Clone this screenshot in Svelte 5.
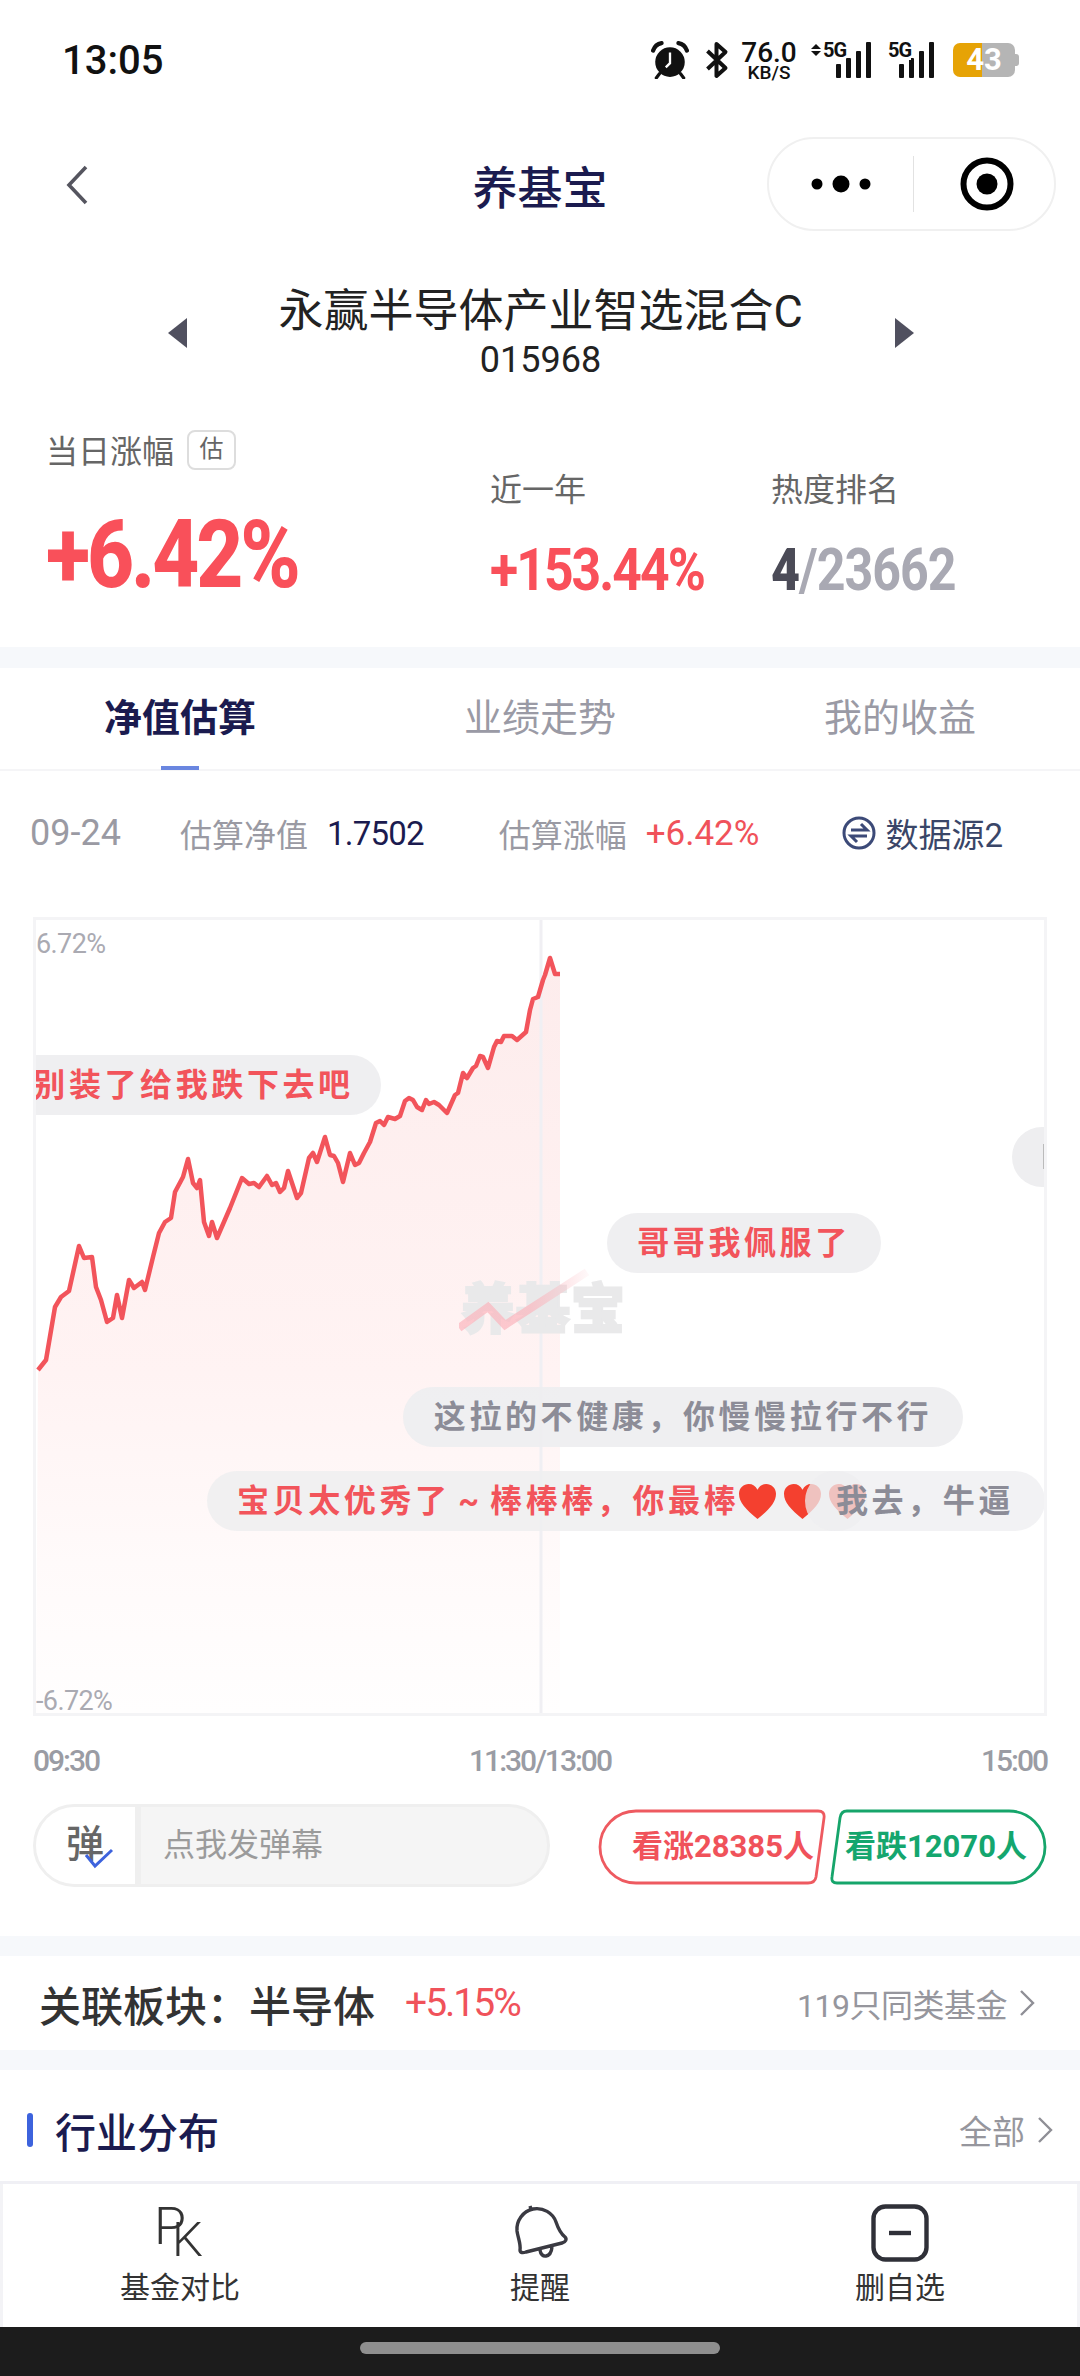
<script>
  // intraday estimate curve, sampled off the chart in page px
  const pts = [[38,1370],[46,1360],[55,1307],[61,1297],[69,1291],[79,1246],[84,1258],[92,1257],[96,1287],[101,1300],[107,1322],[113,1318],[117,1295],[122,1318],[129,1280],[134,1288],[142,1282],[145,1290],[153,1257],[159,1233],[165,1222],[171,1218],[175,1192],[183,1177],[188,1159],[193,1183],[197,1188],[200,1180],[204,1222],[209,1236],[212,1222],[217,1238],[230,1208],[242,1178],[249,1184],[254,1183],[259,1187],[267,1176],[272,1185],[276,1183],[280,1192],[284,1188],[288,1171],[297,1198],[301,1193],[309,1158],[313,1153],[317,1162],[325,1137],[330,1155],[334,1156],[338,1163],[343,1182],[350,1153],[355,1165],[359,1163],[364,1153],[370,1142],[376,1123],[380,1121],[384,1125],[388,1117],[395,1119],[400,1116],[405,1101],[409,1098],[413,1100],[417,1107],[422,1110],[426,1100],[429,1104],[434,1102],[439,1105],[447,1113],[455,1095],[458,1093],[463,1073],[467,1078],[473,1068],[476,1066],[480,1056],[483,1057],[488,1068],[494,1047],[497,1041],[501,1042],[504,1036],[512,1036],[517,1040],[526,1032],[530,1010],[533,999],[538,997],[543,980],[545,975],[550,958],[555,974],[560,974]];
  const line = pts.map((p) => p.join(',')).join(' ');
  const area = `${line} 560,1713 36,1713`;

  const danmaku = [
    { text: '别装了给我跌下去吧', x: -30, y: 135, w: 375, red: true },
    { text: '哥哥我佩服了', x: 571, y: 293, w: 274, red: true },
    { text: '这拉的不健康，你慢慢拉行不行', x: 367, y: 467, w: 560, red: false }
  ];
</script>

<div class="page">
  <header class="status">
    <span class="time">13:05</span>
    <div class="sys">
      <svg class="alarm" viewBox="0 0 36 36" width="38" height="38">
        <circle cx="18" cy="20" r="14" fill="#111" />
        <path d="M2 9 Q4 3 10 2 M34 9 Q32 3 26 2" stroke="#111" stroke-width="4" fill="none" stroke-linecap="round" />
        <path d="M8 31 L5 35 M28 31 L31 35" stroke="#111" stroke-width="3" stroke-linecap="round" />
        <path d="M18 11 V21 L14 25" stroke="#fff" stroke-width="2.2" fill="none" />
      </svg>
      <svg class="bt" viewBox="0 0 24 38" width="25" height="38">
        <path d="M3 10 L21 27 L12 35 V3 L21 11 L3 28" stroke="#111" stroke-width="4" fill="none" stroke-linejoin="round" />
      </svg>
      <div class="speed"><b>76.0</b><small>KB/S</small></div>
      <div class="net">
        <span class="updown">
          <i class="up"></i><i class="down"></i>
        </span>
        <em>5G</em>
        <span class="bars"><i class="b1"></i><i class="b2"></i><i class="b3"></i><i class="b4"></i></span>
      </div>
      <div class="net second">
        <em>5G</em>
        <span class="bars"><i class="b1"></i><i class="b2"></i><i class="b3"></i><i class="b4"></i></span>
      </div>
      <div class="battery"><span>43</span></div>
    </div>
  </header>

  <nav class="nav">
    <svg class="back" viewBox="0 0 24 40" width="24" height="40">
      <path d="M21 2 L4 20 L21 38" stroke="#55555f" stroke-width="3.6" fill="none" />
    </svg>
    <h1>养基宝</h1>
    <div class="capsule">
      <svg viewBox="0 0 60 24" width="60" height="24">
        <circle cx="6" cy="12" r="5.5" /><circle cx="30" cy="12" r="8.5" /><circle cx="54" cy="12" r="5.5" />
      </svg>
      <span class="sep"></span>
      <svg viewBox="0 0 54 54" width="54" height="54">
        <circle cx="27" cy="27" r="23.5" fill="none" stroke="#000" stroke-width="6" />
        <circle cx="27" cy="27" r="10.5" />
      </svg>
    </div>
  </nav>

  <section class="fund">
    <i class="tri left"></i>
    <div class="fund-name">
      <div class="name">永赢半导体产业智选混合C</div>
      <div class="code">015968</div>
    </div>
    <i class="tri right"></i>
  </section>

  <section class="hero">
    <div class="stat main">
      <div class="label">当日涨幅<span class="est">估</span></div>
      <div class="big">+6.42%</div>
    </div>
    <div class="stat year">
      <div class="label">近一年</div>
      <div class="mid">+153.44%</div>
    </div>
    <div class="stat rank">
      <div class="label">热度排名</div>
      <div class="mid gray"><b>4</b>/23662</div>
    </div>
  </section>

  <div class="gap g1"></div>

  <div class="tabs">
    <div class="tab on">净值估算</div>
    <div class="tab">业绩走势</div>
    <div class="tab">我的收益</div>
  </div>

  <div class="info">
    <span class="date">09-24</span>
    <span class="k k1">估算净值</span>
    <span class="v">1.7502</span>
    <span class="k k2">估算涨幅</span>
    <span class="v red">+6.42%</span>
    <span class="src">
      <svg viewBox="0 0 34 34" width="34" height="34">
        <circle cx="17" cy="17" r="15" fill="none" stroke="#3c4a78" stroke-width="3" />
        <path d="M9 14 H25 L19 8 M25 20 H9 L15 26" fill="none" stroke="#3c4a78" stroke-width="3" />
      </svg>
      数据源2
    </span>
  </div>

  <div class="chart">
    <svg class="plot" viewBox="33 917 1014 799" preserveAspectRatio="none">
      <defs>
        <linearGradient id="fade" x1="0" y1="0" x2="0" y2="1">
          <stop offset="0" stop-color="#fdecec" />
          <stop offset="0.55" stop-color="#fff3f3" />
          <stop offset="0.8" stop-color="#fffafa" />
          <stop offset="1" stop-color="#fffefe" />
        </linearGradient>
      </defs>
      <polygon points={area} fill="url(#fade)" />
      <line x1="541" y1="917" x2="541" y2="1716" stroke="#f0eff3" stroke-width="3" />
      <polyline points={line} fill="none" stroke="#f2545b" stroke-width="4.5" stroke-linejoin="round" />
    </svg>
    <span class="yl top">6.72%</span>
    <span class="yl bottom">-6.72%</span>

    <div class="mark">养基宝
      <svg viewBox="0 0 140 100" width="140" height="100">
        <defs>
          <linearGradient id="tick" x1="0" y1="0" x2="1" y2="0">
            <stop offset="0.55" stop-color="#fbb5bd" stop-opacity="0.7" />
            <stop offset="1" stop-color="#fbb5bd" stop-opacity="0.1" />
          </linearGradient>
        </defs>
        <path d="M0 84 L29 63 L46 81 L128 28" fill="none" stroke="url(#tick)" stroke-width="8" />
      </svg>
    </div>

    {#each danmaku as d}
      <div class="dm" class:redtext={d.red} style="left:{d.x}px;top:{d.y}px;width:{d.w}px">{d.text}</div>
    {/each}

    <div class="dm redtext long">
      <span>宝贝太优秀了 ~ 棒棒棒，你最棒</span>
      {#each [0, 1, 2] as h}
        <svg class="heart" viewBox="0 0 40 38" width="39" height="37">
          <path d="M20 37 C8 27 1 20 1 11 C1 5 6 1 11 1 C15 1 18 3 20 7 C22 3 25 1 29 1 C34 1 39 5 39 11 C39 20 32 27 20 37 Z" fill="#f4402f" />
        </svg>
      {/each}
    </div>
    <div class="dm over">我去，牛逼</div>
    <div class="dm peek"><i></i></div>
  </div>

  <div class="axis">
    <span>09:30</span><span>11:30/13:00</span><span>15:00</span>
  </div>

  <div class="actions">
    <div class="input">
      <div class="dan">弹
        <svg viewBox="0 0 30 22" width="30" height="22">
          <path d="M2 8 L11 19 L28 3" fill="none" stroke="#3d63dd" stroke-width="3" />
        </svg>
      </div>
      <div class="ph">点我发弹幕</div>
    </div>
    <div class="votes">
      <div class="vote up-v">
        <svg viewBox="0 0 228 76" width="228" height="76">
          <path d="M220 2 Q227 2 226 9 L218 68 Q217 74 210 74 H38 A36 36 0 0 1 38 2 Z" fill="none" stroke="#ee5a60" stroke-width="2.8" />
        </svg>
        <span>看涨28385人</span>
      </div>
      <div class="vote down-v">
        <svg viewBox="0 0 218 76" width="218" height="76">
          <path d="M18 2 H180 A36 36 0 0 1 180 74 H8 Q2 74 3 68 L11 9 Q12 2 18 2 Z" fill="none" stroke="#16a56b" stroke-width="2.8" />
        </svg>
        <span>看跌12070人</span>
      </div>
    </div>
  </div>

  <div class="gap g2"></div>

  <div class="sector">
    <div class="sector-l">关联板块：半导体<span class="red">+5.15%</span></div>
    <div class="more narrow">119只同类基金
      <svg viewBox="0 0 16 28" width="16" height="28"><path d="M2 2 L14 14 L2 26" fill="none" stroke="#8f8f96" stroke-width="2.4" /></svg>
    </div>
  </div>

  <div class="gap g3"></div>

  <div class="industry">
    <div class="ind-l"><i></i>行业分布</div>
    <div class="more">全部
      <svg viewBox="0 0 16 28" width="16" height="28"><path d="M2 2 L14 14 L2 26" fill="none" stroke="#8f8f96" stroke-width="2.4" /></svg>
    </div>
  </div>

  <footer class="tabbar">
    <div class="item">
      <div class="rk"><span class="p">P</span><span class="k-letter">K</span></div>
      <span>基金对比</span>
    </div>
    <div class="item">
      <svg viewBox="0 0 60 58" width="60" height="58">
        <path d="M23 5 C13 7 6 17 7 27 C8 34 11 40 10 46 C10 49 13 49 16 48 L52 39 C56 38 57 35 55 33 C50 29 48 24 46 18 C43 9 33 3 23 5 Z M30 46 C31 55 41 54 42 43 M21 5 L20 2" fill="none" stroke="#3a3a42" stroke-width="3.4" stroke-linejoin="round" />
      </svg>
      <span>提醒</span>
    </div>
    <div class="item">
      <svg viewBox="0 0 58 58" width="58" height="58">
        <rect x="2.5" y="2.5" width="53" height="53" rx="12" fill="none" stroke="#2f3038" stroke-width="4.4" />
        <path d="M18 29 H40" stroke="#2f3038" stroke-width="4.4" />
      </svg>
      <span>删自选</span>
    </div>
  </footer>

  <div class="home"><i></i></div>
</div>

<style>
  :global(body) {
    background: #fff;
  }
  .page {
    width: 1080px;
    height: 2376px;
    overflow: hidden;
    font-family: Roboto, "Noto Sans CJK SC", sans-serif;
    color: #333;
  }
  .red {
    color: #f0525a;
  }

  /* status bar */
  .status {
    height: 100px;
    display: flex;
    justify-content: space-between;
    align-items: center;
    padding: 20px 65px 0 62px;
    box-sizing: border-box;
  }
  .time {
    font-size: 40px;
    font-weight: 500;
    color: #111;
  }
  .sys {
    display: flex;
    align-items: center;
    color: #111;
  }
  .alarm {
    margin-right: 15px;
  }
  .bt {
    margin-right: 12px;
  }
  .speed {
    width: 56px;
    text-align: center;
    line-height: 1;
    margin-right: 14px;
  }
  .speed b {
    display: block;
    font-size: 28px;
    font-weight: 500;
  }
  .speed small {
    display: block;
    font-size: 19px;
    font-weight: 500;
    margin-top: -4px;
  }
  .net {
    position: relative;
    width: 60px;
    height: 36px;
    margin-right: 17px;
    display: flex;
    justify-content: flex-end;
  }
  .net.second {
    width: 46px;
    margin-right: 19px;
  }
  .net em {
    position: absolute;
    left: 12px;
    top: -2px;
    font-style: normal;
    font-size: 20px;
    line-height: 20px;
    font-weight: 700;
    letter-spacing: -1px;
    background: #fff;
  }
  .net.second em {
    left: 0;
  }
  .updown {
    position: absolute;
    left: 0;
    top: 2px;
  }
  .updown i {
    display: block;
    width: 0;
    height: 0;
    border-left: 5px solid transparent;
    border-right: 5px solid transparent;
  }
  .up {
    border-bottom: 5px solid #111;
    margin-bottom: 2px;
  }
  .down {
    border-top: 5px solid #111;
  }
  .bars {
    display: flex;
    align-items: flex-end;
    gap: 5px;
    height: 36px;
  }
  .bars i {
    width: 5px;
    background: #111;
    border-radius: 1px;
  }
  .b1 { height: 14px; }
  .b2 { height: 20px; }
  .b3 { height: 27px; }
  .b4 { height: 36px; }
  .battery {
    width: 62px;
    height: 34px;
    border-radius: 7px;
    background: linear-gradient(90deg, #e6a306 0 46%, #b5b5b5 46% 100%);
    text-align: center;
    position: relative;
  }
  .battery::after {
    content: "";
    position: absolute;
    right: -4px;
    top: 11px;
    width: 4px;
    height: 12px;
    background: #b5b5b5;
    border-radius: 0 3px 3px 0;
  }
  .battery span {
    font-size: 31px;
    line-height: 34px;
    font-weight: 700;
    color: #fff;
    display: block;
  }

  /* nav */
  .nav {
    height: 170px;
    display: flex;
    align-items: center;
    justify-content: center;
    position: relative;
  }
  .nav h1 {
    margin: 0;
    font-size: 45px;
    font-weight: 500;
    color: #1b1b4f;
  }
  .back {
    position: absolute;
    left: 65px;
    top: 65px;
  }
  .capsule {
    position: absolute;
    left: 767px;
    top: 37px;
    width: 289px;
    height: 94px;
    box-sizing: border-box;
    border: 2px solid #f0f0f0;
    border-radius: 47px;
    display: flex;
    align-items: center;
    padding-left: 42px;
  }
  .sep {
    width: 1px;
    height: 56px;
    background: #e2e2e2;
    margin: 0 46px 0 42px;
  }

  /* fund */
  .fund {
    height: 150px;
    display: flex;
    justify-content: center;
    gap: 92px;
    padding: 14px 0 0 1px;
    box-sizing: border-box;
  }
  .fund-name {
    width: 524px;
    text-align: center;
    color: #222;
  }
  .name {
    font-size: 45px;
    line-height: 56px;
    white-space: nowrap;
  }
  .code {
    font-size: 36px;
    line-height: 40px;
  }
  .tri {
    width: 0;
    height: 0;
    border-top: 15px solid transparent;
    border-bottom: 15px solid transparent;
    margin-top: 34px;
  }
  .tri.left {
    border-right: 19px solid #50505f;
  }
  .tri.right {
    border-left: 19px solid #50505f;
  }

  /* hero numbers */
  .hero {
    height: 227px;
    position: relative;
  }
  .stat {
    position: absolute;
  }
  .main { left: 46px; top: 12px; }
  .year { left: 490px; top: 50px; }
  .rank { left: 771px; top: 50px; }
  .label {
    font-size: 32px;
    line-height: 40px;
    color: #666;
    display: flex;
    align-items: center;
    white-space: nowrap;
  }
  .est {
    width: 49px;
    height: 40px;
    box-sizing: border-box;
    border: 2px solid #ddd;
    border-radius: 8px;
    margin: -4px 0 0 13px;
    font-size: 24px;
    line-height: 34px;
    text-align: center;
  }
  .big {
    font-size: 94px;
    line-height: 90px;
    font-weight: 800;
    color: #f9505a;
    letter-spacing: -3.6px;
    margin-top: 38px;
    white-space: nowrap;
    transform: scaleX(0.87);
    transform-origin: left;
  }
  .mid {
    font-size: 59px;
    line-height: 60px;
    font-weight: 700;
    color: #f9505a;
    letter-spacing: -2.2px;
    margin-top: 30px;
    white-space: nowrap;
    transform: scaleX(0.875);
    transform-origin: left;
  }
  .mid.gray {
    color: #a9a9b3;
    letter-spacing: -1.2px;
    transform: scaleX(0.85);
  }
  .mid.gray b {
    color: #4b4b57;
  }

  .gap {
    background: #f6f8fb;
  }
  .g1 { height: 21px; }
  .g2 { height: 20px; }
  .g3 { height: 20px; }

  /* tabs */
  .tabs {
    height: 103px;
    display: grid;
    grid-template-columns: repeat(3, 360px);
    border-bottom: 2px solid #f5f5f7;
    box-sizing: border-box;
  }
  .tab {
    text-align: center;
    font-size: 38px;
    line-height: 100px;
    color: #9a9aa5;
    position: relative;
  }
  .tab.on {
    color: #1b1b4f;
    font-weight: 700;
  }
  .tab.on::after {
    content: "";
    position: absolute;
    left: 161px;
    bottom: -1px;
    width: 38px;
    height: 4px;
    background: #6a86e0;
  }

  /* info row */
  .info {
    height: 146px;
    display: flex;
    align-items: center;
    padding: 0 0 22px 30px;
    box-sizing: border-box;
    font-size: 32px;
    color: #9a9aa3;
  }
  .date {
    font-size: 36px;
    width: 150px;
  }
  .k1 { margin-right: 19px; }
  .k2 { margin-left: 75px; margin-right: 19px; }
  .v {
    font-size: 33px;
    letter-spacing: -0.8px;
    color: #1b1b4f;
  }
  .v.red {
    font-size: 35px;
    letter-spacing: 0;
    color: #f0525a;
  }
  .src {
    margin-left: 83px;
    display: flex;
    align-items: center;
    gap: 9px;
    color: #3a4668;
    font-size: 33px;
  }

  /* chart */
  .chart {
    position: relative;
    margin: 0 33px;
    width: 1014px;
    height: 799px;
    box-sizing: border-box;
    border: 3px solid #f4f4f6;
    overflow: hidden;
  }
  .plot {
    position: absolute;
    left: -3px;
    top: -3px;
    width: 1014px;
    height: 799px;
  }
  .yl {
    position: absolute;
    left: 0;
    font-size: 27px;
    color: #aaaab2;
    letter-spacing: -0.6px;
    line-height: 30px;
  }
  .top { top: 9px; }
  .bottom { top: 766px; }
  .mark {
    position: absolute;
    left: 425px;
    top: 356px;
    font-size: 54px;
    font-weight: 900;
    color: #e9e9ea;
    line-height: 70px;
    white-space: nowrap;
    letter-spacing: 1px;
    -webkit-text-stroke: 2px #e9e9ea;
  }
  .mark svg {
    position: absolute;
    left: -2px;
    top: -32px;
  }
  .dm {
    position: absolute;
    height: 60px;
    border-radius: 30px;
    background: rgba(238, 238, 240, 0.92);
    font-size: 32px;
    font-weight: 700;
    line-height: 60px;
    letter-spacing: 3.6px;
    text-align: center;
    color: #8c8c97;
    white-space: nowrap;
  }
  .redtext {
    color: #f2545b;
  }
  .long {
    left: 171px;
    top: 551px;
    width: 660px;
    display: flex;
    align-items: center;
    padding-left: 30px;
    box-sizing: border-box;
    background: rgba(238, 238, 240, 0.85);
    word-spacing: -4px;
  }
  .heart {
    flex: none;
    margin-right: 6px;
  }
  .long span + .heart {
    margin-left: -1px;
  }
  .over {
    left: 769px;
    top: 551px;
    width: 240px;
    background: rgba(238, 238, 240, 0.75);
  }
  .peek {
    left: 976px;
    top: 207px;
    width: 60px;
    height: 60px;
    background: #eeeef0;
  }
  .peek i {
    position: absolute;
    left: 31px;
    top: 17px;
    width: 2px;
    height: 25px;
    background: #bbb;
  }

  .axis {
    height: 88px;
    margin: 0 33px;
    display: flex;
    justify-content: space-between;
    align-items: center;
    font-size: 30px;
    font-weight: 500;
    color: #9a9ca4;
    letter-spacing: -2px;
  }

  /* danmaku input and votes */
  .actions {
    height: 132px;
    margin: 0 33px;
    display: flex;
    justify-content: space-between;
    align-items: flex-start;
  }
  .input {
    width: 517px;
    height: 83px;
    box-sizing: border-box;
    border: 3px solid #efefef;
    border-radius: 42px;
    background: #f5f5f5;
    overflow: hidden;
    display: flex;
  }
  .dan {
    width: 69px;
    background: #fff;
    border-right: 6px solid #efefef;
    font-size: 38px;
    font-weight: 500;
    color: #666;
    line-height: 74px;
    padding-left: 30px;
    position: relative;
  }
  .dan svg {
    position: absolute;
    left: 48px;
    top: 40px;
  }
  .ph {
    padding-left: 22px;
    font-size: 32px;
    line-height: 76px;
    color: #9b9b9b;
  }
  .votes {
    display: flex;
    margin-top: 5px;
    width: 449px;
    justify-content: space-between;
  }
  .vote {
    position: relative;
    height: 76px;
    font-size: 31px;
    font-weight: 700;
    line-height: 76px;
    white-space: nowrap;
  }
  .vote svg {
    display: block;
  }
  .vote span {
    position: absolute;
    top: 0;
  }
  .up-v {
    color: #f0525a;
    width: 228px;
  }
  .up-v span {
    left: 34px;
  }
  .down-v {
    color: #14a66e;
    width: 218px;
  }
  .down-v span {
    left: 16px;
  }

  /* sector row */
  .sector {
    height: 94px;
    display: flex;
    justify-content: space-between;
    align-items: center;
    padding: 0 45px 0 39px;
  }
  .sector-l {
    font-size: 42px;
    font-weight: 500;
    color: #333;
    display: flex;
    align-items: center;
  }
  .sector-l .red {
    font-size: 39px;
    font-weight: 400;
    letter-spacing: -2px;
    margin-left: 30px;
  }
  .more {
    font-size: 33px;
    color: #96969d;
    display: flex;
    align-items: center;
    gap: 12px;
  }
  .more.narrow {
    font-size: 32px;
    letter-spacing: -0.5px;
  }

  .industry {
    height: 111px;
    display: flex;
    justify-content: space-between;
    align-items: center;
    padding: 9px 27px 0 27px;
    box-sizing: border-box;
  }
  .ind-l {
    display: flex;
    align-items: center;
    gap: 22px;
    font-size: 41px;
    font-weight: 500;
    color: #1b1b4f;
  }
  .ind-l i {
    width: 6px;
    height: 34px;
    background: #3d63dd;
    border-radius: 3px;
  }

  /* bottom actions */
  .tabbar {
    height: 146px;
    border-top: 3px solid #f0f0f5;
    box-shadow: inset 3px 0 #f3f3f6, inset -3px 0 #f3f3f6;
    box-sizing: border-box;
    display: grid;
    grid-template-columns: repeat(3, 1fr);
  }
  .item {
    display: flex;
    flex-direction: column;
    align-items: center;
    padding-top: 20px;
    font-size: 30px;
    color: #333;
    line-height: 40px;
    gap: 6px;
  }
  .item svg {
    display: block;
  }
  .rk {
    position: relative;
    width: 58px;
    height: 58px;
    font-weight: 300;
    color: #333;
  }
  .p {
    position: absolute;
    left: 3px;
    top: -2px;
    font-size: 52px;
    line-height: 50px;
  }
  .k-letter {
    position: absolute;
    left: 21px;
    top: 8px;
    font-size: 49px;
    line-height: 56px;
  }

  .home {
    height: 49px;
    background: #1c1c1c;
    display: flex;
    justify-content: center;
    padding-top: 15px;
    box-sizing: border-box;
  }
  .home i {
    width: 360px;
    height: 12px;
    border-radius: 6px;
    background: #8f8f8f;
  }
</style>
